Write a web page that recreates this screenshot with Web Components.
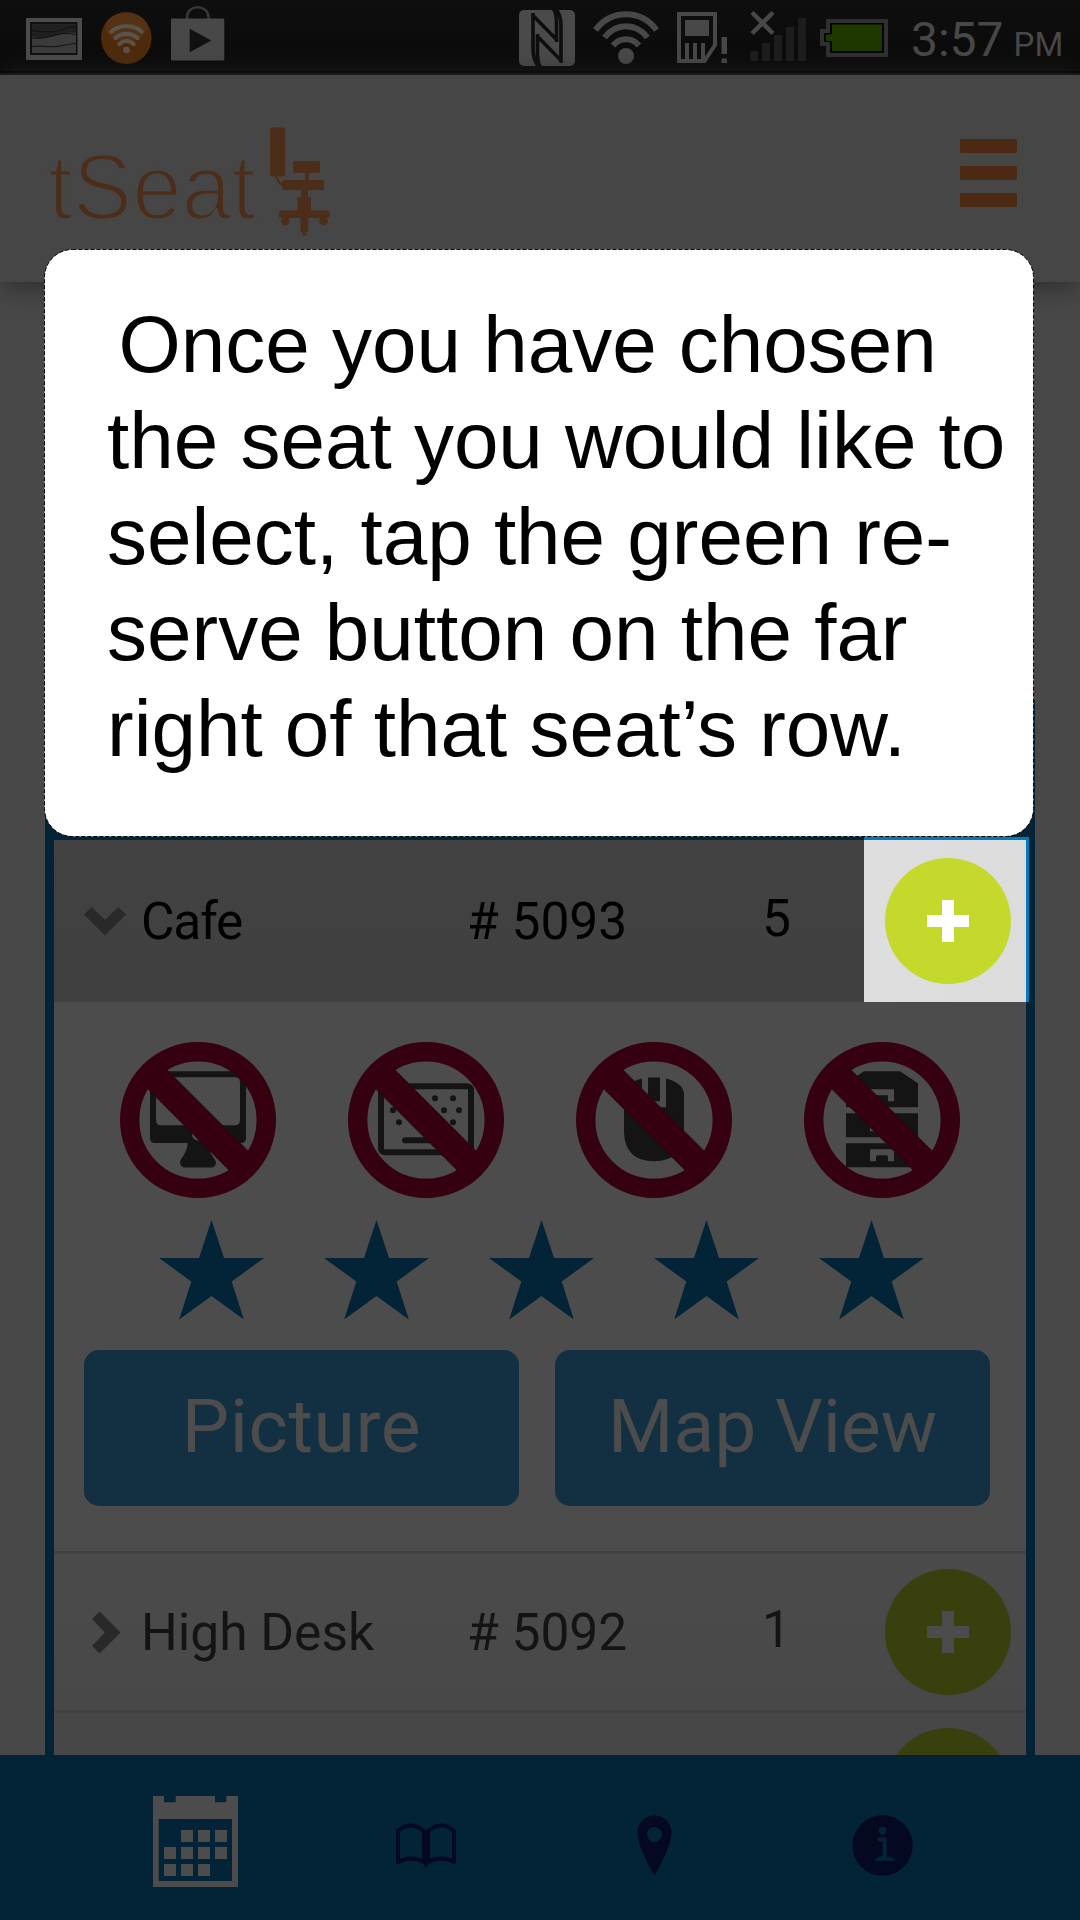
<!DOCTYPE html>
<html lang="en">
<head>
<meta charset="utf-8">
<title>tSeat</title>
<style>
html,body{margin:0;padding:0}
body{width:1080px;height:1920px;overflow:hidden;background:#484848;font-family:Roboto,sans-serif}
</style>
</head>
<body>
<seat-app></seat-app>
<script>
const define = (name, css, html) => customElements.define(name, class extends HTMLElement {
  constructor() {
    super();
    const root = this.attachShadow({ mode: 'open' });
    root.innerHTML = `<style>${css}</style>${typeof html === 'function' ? html(this) : html}`;
  }
});

define('status-bar', `
:host{display:flex;box-sizing:border-box;height:75px;background:linear-gradient(#0e0e0e,#0b0b0b 71px,#000 71px,#000 73px,#141414 73px);color:#484848;justify-content:space-between}
svg{display:block;flex:none}
.right{display:flex}
.time{display:flex;width:169px;white-space:pre;align-items:baseline;line-height:79px;font-size:48px}
.time small{font-size:33px;margin-left:10px}
`, `
<svg width="240" height="70" viewBox="0 0 240 70">
 <rect x="26" y="18" width="56" height="42" fill="#4c4c4c"/><rect x="30" y="22" width="47.500" height="33" fill="#101010"/>
 <rect x="32" y="24.500" width="44" height="28.500" fill="#3c3c3c"/>
 <path d="M32 24.500H76V33C66 31 60 35 50 37S40 38 32 37Z" fill="#202020"/>
 <path d="M32 30.500C45 33 58 32 64 29S72 28 76 27M32 38C45 40 54 34 64 33.500S72 35 76 34.500M32 46.500C42 45 48 48 60 46S70 44 76 43.500" fill="none" stroke="#111" stroke-width="1"/>
 <ellipse cx="126.300" cy="38" rx="25.300" ry="26" fill="#4f2b0c"/>
 <ellipse cx="126.300" cy="27" rx="21" ry="14" fill="#5b3a20" opacity=".5"/>
 <g fill="none" stroke="#5a534c" stroke-width="4.200" stroke-linecap="round"><path d="M111.500 31.500C119 24.500 134 24.500 141.500 31.500M115.500 38C121.500 32.500 131.500 32.500 137.500 38M119.500 44C123.500 40 129.500 40 133.500 44"/></g>
 <circle cx="126.500" cy="50" r="3.300" fill="#5a534c"/>
 <path d="M187 20V17C187 4 208.500 4 208.500 17V20" fill="none" stroke="#363636" stroke-width="2.600"/>
 <rect x="171" y="18.500" width="53.300" height="42" rx="1" fill="#484848"/><path d="M189.700 28.700 211.300 40.400 189.700 52.300Z" fill="#111"/>
</svg>
<div class="right">
<svg width="396" height="70" viewBox="515 0 396 70">
 <rect x="519" y="10" width="56" height="56" rx="5" fill="#4a4a4a"/>
 <path d="M533 13V48Q533 60 538.500 67M532 14.500 556.500 39.500M556.500 42V24Q556.500 13 553.500 9M561 63V26Q561 14 555.500 9M562 61.500 537.500 36.500M537.500 34V52Q537.500 63 540.500 67" fill="none" stroke="#0e0e0e" stroke-width="3.600"/>
 <path d="M538.500 27.500 553 42.500V33" fill="none" stroke="#4a4a4a" stroke-width="0"/>
 <g fill="none" stroke="#484848" stroke-width="6"><path d="M595.500 30C611 9 641 9 656.500 30M604.500 37.500C616 22.500 636 22.500 647.500 37.500M613 45.500C620 37 632 37 639 45.500"/></g>
 <circle cx="626" cy="56" r="8" fill="#484848"/>
 <path d="M679 14H715V45L704.500 61H679Z" fill="none" stroke="#484848" stroke-width="4"/>
 <path d="M685 20H709V36H685ZM685 43H689V61H685ZM693 43H697V61H693ZM701 43H705V61H701ZM721.500 37H727V54H721.500ZM721.500 58.500H727V63H721.500Z" fill="#484848"/>
 <path d="M752 12.500 773 33.500M773 12.500 752 33.500" stroke="#484848" stroke-width="4.500"/>
 <path d="M750.500 51H758V61H750.500ZM762 43H770V61H762ZM774 35H782V61H774ZM786 27H794V61H786ZM798 18H806V61H798Z" fill="#1d1d1d"/>
 <path d="M828 21H886V55H828V44H822V31H828Z" fill="#050505" stroke="#303030" stroke-width="4"/>
 <path d="M832 24.500H882V51H832V41H826V34.500H832Z" fill="#1f3800"/>
</svg>
<div class="time">3:57<small>PM</small></div></div>
`);

define('app-header', `
:host{display:flex;box-sizing:border-box;height:207px;background:#464646;justify-content:space-between;align-items:flex-start;padding:52px 63px 0 46px;box-shadow:0 4px 26px #2b2b2b;position:relative}
svg{display:block}
text{font:92.500px "Liberation Sans",sans-serif;fill:#4b2d19;stroke:#464646;stroke-width:2.900px}
.menu{display:flex;flex-direction:column;gap:13px;padding-top:12px}
.menu i{width:57px;height:14px;border-radius:1.500px;background:#4c2912}
`, `
<svg width="290" height="112" viewBox="46 127 290 112">
 <text x="48" y="218.800" textLength="208" lengthAdjust="spacingAndGlyphs">tSeat</text>
 <g fill="#4b2d19"><rect x="270" y="127.500" width="15.300" height="49" rx="3"/><rect x="293" y="161" width="27" height="12" rx="2"/><rect x="305" y="172" width="4" height="9"/><rect x="282" y="180" width="42" height="10" rx="2"/><path d="M301 189H308V197H311V212H297.500V197H301Z"/><rect x="279" y="210.500" width="50.500" height="7.500" rx="2"/><circle cx="285.300" cy="221" r="4.300"/><circle cx="323.500" cy="221" r="4.300"/><path d="M300.500 217H308.300V232H306.500V235.500H302.500V232H300.500Z"/></g>
 <path d="M276 175Q277.500 183 284 186" fill="none" stroke="#4b2d19" stroke-width="2.200"/>
</svg>
<div class="menu"><i></i><i></i><i></i></div>
`);

define('reserve-button', `
:host{display:block;width:126px;height:126px;--fill:#3a3f0e;--cross:#4c4c4c}
:host([active]){--fill:#c5d92d;--cross:#fff}
svg{display:block}
`, `<svg width="126" height="126" viewBox="0 0 126 126"><circle cx="63" cy="63" r="63" fill="var(--fill)"/><path d="M57 42H69V57H84V69H69V84H57V69H42V57H57Z" fill="var(--cross)"/></svg>`);

define('seat-row', `
:host{display:grid;grid-template-columns:87px 326px 295px 102px 162px;height:156px;align-items:center;color:#141414;font-size:51.500px;line-height:60px;background:linear-gradient(#4b4b4b,#484848)}
:host([open]){height:162px;background:linear-gradient(#424242,#404040);color:#000}
svg{display:block;margin-left:30px}
:host(:not([open])) svg{transform:translateX(1.500px) rotate(-90deg)}
span:not(.cell){padding-top:2px}
:host([open]) .name{letter-spacing:-1.300px}
.n{margin-top:-6px}
.cell{display:flex;align-items:center;justify-content:center;height:100%;padding-left:6px;box-sizing:border-box}
:host([open]) .cell{background:linear-gradient(90deg,#dedede,#dcdcdc);box-shadow:3px 0 #007ab8,0 -3px #007ab8,3px -3px #007ab8}
`, el => `
<svg width="42" height="29" viewBox="0 0 42 29"><path d="M0 7.600 7.600 0 21 12.800 34.400 0 42 7.600 21 28.600Z" fill="#292929"/></svg>
<span class="name">${el.getAttribute('name')}</span><span>${el.getAttribute('number')}</span><span class="n">${el.getAttribute('count')}</span>
<span class="cell"><reserve-button ${el.hasAttribute('open') ? 'active' : ''}></reserve-button></span>`);

const pictures = {
  monitor: `<path fill-rule="evenodd" d="M-43-48.700H43Q48-48.700 48-43.700V18Q48 23 43 23H11Q10 30 15 37Q18 40 18 43Q17 47.500 13 47.500H-13Q-17 47.500-18 43Q-18 40-14 35Q-10 27-10.500 23H-43Q-48 23-48 18V-43.700Q-48-48.700-43-48.700ZM-37-42.700Q-42-42.700-42-37.700V.3Q-42 5.300-37 5.300H37Q42 5.300 42 .3V-37.700Q42-42.700 37-42.700Z"/><circle cy="14.500" r="6" fill="#4c4c4c"/>`,
  keyboard: `<rect x="-45" y="-33.700" width="90" height="66" rx="4" fill="none" stroke="#141414" stroke-width="6"/><g><circle cx="9" cy="-21.700" r="3"/><circle cx="27" cy="-21.700" r="3"/><circle cx="-9" cy="-21.700" r="3"/><circle cx="18" cy="-9.700" r="3"/><circle cx="33" cy="-9.700" r="3"/><circle cx="-33" cy="-9.700" r="3"/><circle cx="27" cy="2.300" r="3"/><circle cx="-27" cy="2.300" r="3"/><rect x="-24" y="17.300" width="48" height="6" rx="3"/></g>`,
  mouse: `<path d="M-12-41.500V-12.700H12V-41.500Q30-37 30-25V12Q29 41.300 0 41.300T-30 12V-25Q-30-37-12-41.500Z"/><path d="M-6-42.500H6V-18.700H-6Z"/>`,
  cabinet: `<path d="M-18-48.700H18L36-36.700V-12.700H-36V-36.700ZM-36-6.700H36V17.300H-36ZM-36 23.300H36V47.300H-36Z"/><path fill="#4c4c4c" d="M-12-30.700H12V-18.700H6V-24.700H-6V-18.700H-12ZM-12-.7H12V11.300H6V5.300H-6V11.300H-12ZM-12 29.300H12V41.300H6V37Q6 35.300 4 35.300H-4Q-6 35.300-6 37V41.300H-12Z"/>`
};
define('missing-item', `:host{display:block;width:156px;height:156px}svg{display:block}`, el => `
<svg width="156" height="156" viewBox="-78 -78 156 156"><g fill="#141414">${pictures[el.getAttribute('kind')]}</g>
<g fill="none" stroke="#350010"><circle r="68.300" stroke-width="19.400"/><path d="M-48-48 48 48" stroke-width="27.700"/></g></svg>`);

define('rating-star', `:host{display:block;width:105px;height:100px}svg{display:block}`,
`<svg width="105" height="100" viewBox="0 0 105 100"><path d="M52.500 0 65 38H105L72.700 61.500 84.800 99.500 52.500 76 20.200 99.500 32.300 61.500 0 38H40Z" fill="#022436"/></svg>`);

define('action-button', `:host{display:block;box-sizing:border-box;width:435px;height:156px;border-radius:15px;background:#123042;color:#4c4c4c;font-size:75px;line-height:152px;text-align:center}:host([wide]){letter-spacing:.6px}`, `<slot></slot>`);

define('seat-details', `
:host{display:block;box-sizing:border-box;height:552px;padding-top:39.500px;background:#4c4c4c;border-bottom:3px solid #424242}
.items{display:flex;gap:72px;padding-left:66px}
.stars{display:flex;gap:60px;padding:22.500px 0 0 105px}
.actions{display:flex;gap:36px;padding:30px 0 0 30px}
`, `
<div class="items"><missing-item kind="monitor"></missing-item><missing-item kind="keyboard"></missing-item><missing-item kind="mouse"></missing-item><missing-item kind="cabinet"></missing-item></div>
<div class="stars"><rating-star></rating-star><rating-star></rating-star><rating-star></rating-star><rating-star></rating-star><rating-star></rating-star></div>
<div class="actions"><action-button wide>Picture</action-button><action-button>Map View</action-button></div>`);

define('seat-list', `
:host{display:block;box-sizing:border-box;height:1055px;margin:418px 45px 0;border:solid #022436;border-width:140px 9px 0;flex:none}
.line{height:3px;background:#424242}
.next{display:flex;justify-content:flex-end;height:42px;overflow:hidden;padding:15px 15px 0 0;background:#474747;box-sizing:border-box}
`, `<div><seat-row open name="Cafe" number="# 5093" count="5"></seat-row><seat-details></seat-details><seat-row name="High Desk" number="# 5092" count="1"></seat-row><div class="line"></div><div class="next"><reserve-button></reserve-button></div></div>`);

define('tab-bar', `
:host{display:flex;height:165px;background:#022436;position:relative;box-sizing:border-box;padding-left:153px;align-items:flex-start}
svg{display:block}
.cal{margin-top:41px}.book{margin:68px 0 0 158px}.pin{margin:60px 0 0 180.500px}.info{margin:60px 0 0 180px}
`, `
<svg class="cal" width="85" height="91" viewBox="0 0 85 91" fill="#4c4c4c"><path fill-rule="evenodd" d="M0 0H11V6.300H22.700V0H62V6.300H73.300V0H85V91H0ZM5.700 23V85H79V23Z"/><path d="M28 34H40V46H28ZM45 34H57V46H45ZM62 34H74V46H62ZM11 51H23V63H11ZM28 51H40V63H28ZM45 51H57V63H45ZM62 51H74V63H62ZM11 68H23V80H11ZM28 68H40V80H28ZM45 68H57V80H45Z"/></svg>
<svg class="book" width="60" height="46" viewBox="0 0 60 46"><path d="M2 8Q14-3 28 8V39Q15 32 2 39ZM58 8Q46-3 32 8V39Q45 32 58 39Z" fill="none" stroke="#040921" stroke-width="4" stroke-linejoin="round"/><path d="M27 7H33V41L30 45 27 41Z" fill="#040921"/></svg>
<svg class="pin" width="35" height="61" viewBox="0 0 35 61"><path fill-rule="evenodd" d="M17.500.5C27 .5 34.500 8 34.500 17.500C34.500 30 24 49 17.500 60.500C11 49 .5 30 .5 17.500C.5 8 8 .5 17.500.5ZM17.500 12A7.500 7.500 0 1 0 17.500 27A7.500 7.500 0 1 0 17.500 12Z" fill="#040921"/></svg>
<svg class="info" width="61" height="61" viewBox="0 0 61 61"><circle cx="30.500" cy="30.500" r="30.200" fill="#040921"/><circle cx="30.500" cy="15.500" r="3.900" fill="#022436"/><path d="M25 22.500H34.500V41.500L38 42Q42 43 43.500 45.800H21.500Q24 43 27.500 41.800L30.500 41.500V26.500H26.500Z" fill="#022436"/></svg>`);

define('coach-card', `
:host{display:block;position:absolute;left:44px;top:249px;width:990px;height:588px;color:#000;font:80px/96px "Liberation Sans",Arial,sans-serif}
svg{position:absolute;inset:0}
p{position:relative;margin:0;padding:48px 0 0 63px;white-space:nowrap;text-indent:11.500px}
`, `<svg width="990" height="588"><rect x=".5" y=".5" width="989" height="587" rx="28" fill="#fff"/><rect x=".5" y=".5" width="989" height="587" rx="28" fill="none" stroke="#000" stroke-dasharray="4 2"/></svg><p><slot></slot></p>`);

define('seat-app', `
:host{display:flex;flex-direction:column;width:1080px;height:1920px;position:relative;overflow:hidden;background:#484848}
`, `<status-bar></status-bar><app-header></app-header><seat-list></seat-list><tab-bar></tab-bar>
<coach-card>Once you have chosen<br>the seat you would like to<br>select, tap the green re-<br>serve button on the far<br>right of that seat’s row.</coach-card>`);
</script>
</body>
</html>
